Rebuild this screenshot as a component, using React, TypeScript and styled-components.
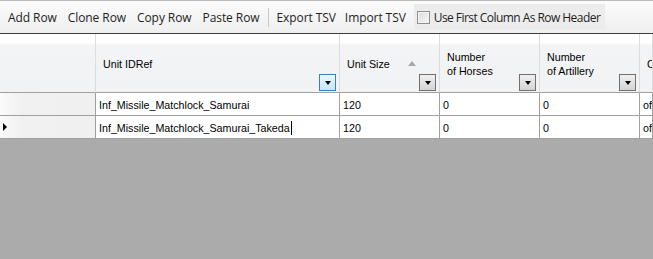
import React from "react";
import styled, { createGlobalStyle } from "styled-components";

const Global = createGlobalStyle`
  html, body { margin: 0; padding: 0; }
  body { background: #ababab; width: 653px; height: 259px; overflow: hidden; }
  #root { width: 653px; }
`;

const Toolbar = styled.div`
  display: flex;
  align-items: center;
  height: 34px;
  box-sizing: border-box;
  border-top: 1px solid #b9b9b9;
  border-bottom: 1px solid #3c3c3c;
  background: linear-gradient(#fbfbfb, #efefef);
  padding-left: 8px;
  font-family: "Open Sans", "Liberation Sans", sans-serif;
  font-size: 12px;
  color: #1e1e1e;
`;

const ToolButton = styled.span<{ $gap?: number }>`
  margin-right: ${(p) => p.$gap ?? 11}px;
  white-space: nowrap;
  letter-spacing: -0.08px;
`;

const Separator = styled.span`
  width: 1px;
  height: 19px;
  background: #c8c8c8;
  margin-right: 8px;
`;

const CheckHost = styled.label`
  display: flex;
  align-items: center;
  height: 26px;
  padding: 0 5px 0 3px;
  margin-left: -3px;
  background: #ececec;
  letter-spacing: -0.55px;
  white-space: nowrap;
`;

const Box = styled.span`
  width: 13px;
  height: 13px;
  box-sizing: border-box;
  border: 1px solid #8e8f8f;
  background: linear-gradient(135deg, #dcdcdc, #f7f7f7);
  margin-right: 4px;
  box-shadow: inset 0 0 0 1px #f4f4f4;
`;

const Grid = styled.div`
  display: grid;
  grid-template-columns: 96px 244px 100px 100px 100px 13px;
  grid-template-rows: 59px 23px 23px;
  font-family: "Liberation Sans", Arial, sans-serif;
  font-size: 10.7px;
  color: #000;
  overflow: hidden;
  width: 653px;
`;

const HeaderCell = styled.div`
  position: relative;
  box-sizing: border-box;
  border-right: 1px solid #dcdcdc;
  border-bottom: 1px solid #a0a0a0;
  background: linear-gradient(#ffffff 0, #ffffff 9px, #f3f4f6 11px, #f1f2f4 100%);
  display: flex;
  align-items: center;
  padding-left: 7px;
  padding-top: 2px;
  line-height: 14px;
  white-space: nowrap;
  overflow: hidden;
`;

const FilterBtn = styled.span<{ $active?: boolean }>`
  position: absolute;
  right: 3px;
  bottom: 1px;
  width: 17px;
  height: 17px;
  box-sizing: border-box;
  border: 1px solid ${(p) => (p.$active ? "#3c7fb1" : "#707070")};
  background: ${(p) =>
    p.$active
      ? "linear-gradient(#eaf6fd, #c6e5f8)"
      : "linear-gradient(#f0f0f0, #d4d4d4)"};
  display: flex;
  align-items: center;
  justify-content: center;
  &::after {
    content: "";
    border-left: 3.5px solid transparent;
    border-right: 3.5px solid transparent;
    border-top: 4px solid #000;
    margin-top: 1px;
  }
`;

const SortGlyph = styled.span`
  position: absolute;
  left: 68px;
  top: 27px;
  border-left: 4.5px solid transparent;
  border-right: 4.5px solid transparent;
  border-bottom: 5px solid #a8a8a8;
`;

const RowHead = styled.div<{ $current?: boolean }>`
  box-sizing: border-box;
  border-right: 1px solid #a0a0a0;
  border-bottom: 1px solid #a0a0a0;
  background: linear-gradient(90deg, #fbfbfb, #f1f1f1 20px, #f0f0f0);
  display: flex;
  align-items: center;
  padding-left: 3px;
  &::after {
    content: "";
    display: ${(p) => (p.$current ? "block" : "none")};
    border-top: 4px solid transparent;
    border-bottom: 4px solid transparent;
    border-left: 4px solid #000;
  }
`;

const Cell = styled.div`
  box-sizing: border-box;
  border-right: 1px solid #a0a0a0;
  border-bottom: 1px solid #a0a0a0;
  background: #fff;
  display: flex;
  align-items: center;
  padding-left: 3px;
  padding-top: 1px;
  white-space: nowrap;
  overflow: hidden;
`;

const Caret = styled.span`
  display: inline-block;
  width: 1px;
  height: 14px;
  background: #000;
  margin-left: 1px;
`;

const columns = [
  { label: ["Unit IDRef"], filterActive: true },
  { label: ["Unit Size"], sort: true },
  { label: ["Number", "of Horses"] },
  { label: ["Number", "of Artillery"] },
  { label: ["Class"] },
];

const rows = [
  ["Inf_Missile_Matchlock_Samurai", "120", "0", "0", "off"],
  ["Inf_Missile_Matchlock_Samurai_Takeda", "120", "0", "0", "off"],
];

export default function App() {
  return (
    <>
      <Global />
      <Toolbar>
        <ToolButton>Add Row</ToolButton>
        <ToolButton>Clone Row</ToolButton>
        <ToolButton>Copy Row</ToolButton>
        <ToolButton $gap={8}>Paste Row</ToolButton>
        <Separator />
        <ToolButton $gap={9}>Export TSV</ToolButton>
        <ToolButton $gap={11}>Import TSV</ToolButton>
        <CheckHost>
          <Box />
          Use First Column As Row Header
        </CheckHost>
      </Toolbar>
      <Grid>
        <HeaderCell />
        {columns.map((c, i) => (
          <HeaderCell key={i}>
            <div>
              {c.label.map((l, j) => (
                <div key={j}>{l}</div>
              ))}
            </div>
            {c.sort && <SortGlyph />}
            {i < 4 && <FilterBtn $active={c.filterActive} />}
          </HeaderCell>
        ))}
        {rows.map((r, ri) => (
          <React.Fragment key={ri}>
            <RowHead $current={ri === 1} />
            {r.map((v, ci) => (
              <Cell key={ci}>
                {v}
                {ri === 1 && ci === 0 && <Caret />}
              </Cell>
            ))}
          </React.Fragment>
        ))}
      </Grid>
    </>
  );
}
